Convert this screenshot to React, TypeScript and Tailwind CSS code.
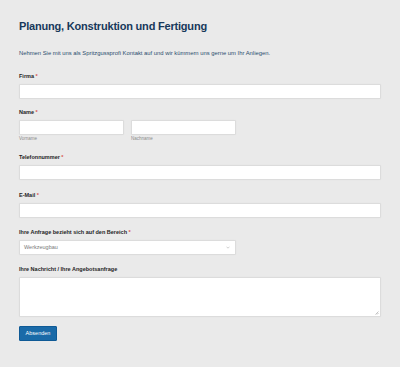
import type { ReactNode } from "react";

function Label({ children, required, className = "" }: { children: ReactNode; required?: boolean; className?: string }) {
  return (
    <p className={`h-[6px] text-[5.5px] font-bold leading-[6px] text-[#1e1e1e] ${className}`}>
      {children}
      {required && <span className="ml-[1.5px] text-[#d9534f]">*</span>}
    </p>
  );
}

const field = "h-[15px] rounded-[1px] border border-[#dcdcdc] bg-white shadow-[0_0_1px_rgba(0,0,0,0.08)]";

export default function App() {
  return (
    <div
      className="min-h-[367px] w-[400px] bg-[#eaeaea] px-[19px] pt-[21px]"
      style={{ fontFamily: '"Liberation Sans", Arial, sans-serif' }}
    >
      <h1 className="text-[11px] font-bold leading-none tracking-[-0.2px] text-[#17385a]">
        Planung, Konstruktion und Fertigung
      </h1>
      <p className="mt-[19px] text-[5.85px] leading-none text-[#2a4d6e]">
        Nehmen Sie mit uns als Spritzgussprofi Kontakt auf und wir kümmern uns gerne um Ihr Anliegen.
      </p>

      <div className="mt-[16px] flex flex-col">
        <Label required>Firma</Label>
        <div className={`mt-[5px] w-[362px] ${field}`} />

        <Label required className="mt-[10px]">Name</Label>
        <div className="mt-[5px] flex gap-[7px]">
          <div className="flex w-[105px] flex-col">
            <div className={field} />
            <span className="mt-[2px] text-[4.5px] leading-none text-[#8a8a8a]">Vorname</span>
          </div>
          <div className="flex w-[105px] flex-col">
            <div className={field} />
            <span className="mt-[2px] text-[4.5px] leading-none text-[#8a8a8a]">Nachname</span>
          </div>
        </div>

        <Label required className="mt-[13px]">Telefonnummer</Label>
        <div className={`mt-[5px] w-[362px] ${field}`} />

        <Label required className="mt-[12px]">E-Mail</Label>
        <div className={`mt-[5px] w-[362px] ${field}`} />

        <Label required className="mt-[11px]">Ihre Anfrage bezieht sich auf den Bereich</Label>
        <div className={`mt-[5px] flex w-[217px] items-center justify-between px-[4px] ${field}`}>
          <span className="text-[5.5px] leading-none text-[#7a7a7a]">Werkzeugbau</span>
          <svg width="4" height="3" viewBox="0 0 4 3" className="mr-[1px]">
            <path d="M0.5 0.7 L2 2.2 L3.5 0.7" fill="none" stroke="#b0b0b0" strokeWidth="0.6" />
          </svg>
        </div>

        <Label className="mt-[11px]">Ihre Nachricht / Ihre Angebotsanfrage</Label>
        <div className={`relative mt-[5px] h-[40px] w-[362px] ${field}`}>
          <svg width="4" height="4" viewBox="0 0 4 4" className="absolute bottom-[1px] right-[1px]">
            <path d="M0.5 3.5 L3.5 0.5 M2 3.5 L3.5 2" stroke="#9a9a9a" strokeWidth="0.6" />
          </svg>
        </div>

        <div className="mt-[9px] flex">
          <button className="flex h-[15px] w-[38px] items-center justify-center rounded-[1px] border border-[#0f5a96] bg-[#1a6aa8] text-[5.5px] leading-none text-white">
            Absenden
          </button>
        </div>
      </div>
    </div>
  );
}
